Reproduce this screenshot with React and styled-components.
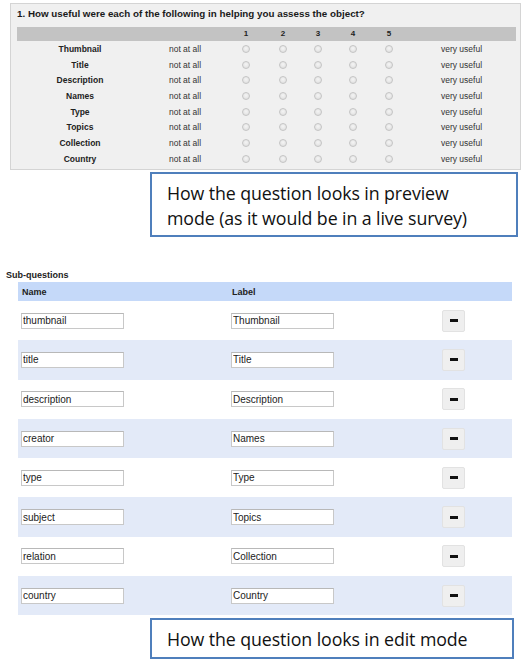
import React from "react";
import styled, { createGlobalStyle } from "styled-components";

const items = [
  { name: "thumbnail", label: "Thumbnail" },
  { name: "title", label: "Title" },
  { name: "description", label: "Description" },
  { name: "creator", label: "Names" },
  { name: "type", label: "Type" },
  { name: "subject", label: "Topics" },
  { name: "relation", label: "Collection" },
  { name: "country", label: "Country" },
];

const cols = "126px 84px 38px 36px 34px 36px 36px 1fr";

const App = () => (
  <Page>
    <GlobalStyle />
    <Preview>
      <Question>1. How useful were each of the following in helping you assess the object?</Question>
      <Scale>
        <ScaleHead>
          <span />
          <span />
          {[1, 2, 3, 4, 5].map((n) => (
            <span key={n}>{n}</span>
          ))}
          <span />
        </ScaleHead>
        {items.map((it) => (
          <ScaleRow key={it.name}>
            <RowLabel>{it.label}</RowLabel>
            <Anchor>not at all</Anchor>
            {[1, 2, 3, 4, 5].map((n) => (
              <Cell key={n}>
                <Radio />
              </Cell>
            ))}
            <Anchor>very useful</Anchor>
          </ScaleRow>
        ))}
      </Scale>
    </Preview>

    <Callout $top={2} $width={368} $height={65}>
      How the question looks in preview
      <br />
      mode (as it would be in a live survey)
    </Callout>

    <SectionTitle>Sub-questions</SectionTitle>
    <EditTable>
      <EditHead>
        <span>Name</span>
        <span>Label</span>
      </EditHead>
      {items.map((it, i) => (
        <EditRow key={it.name} $alt={i % 2 === 1}>
          <TextBox defaultValue={it.name} />
          <TextBox defaultValue={it.label} />
          <RemoveButton aria-label="remove">
            <Minus />
          </RemoveButton>
        </EditRow>
      ))}
    </EditTable>

    <Callout $top={3} $width={364} $height={41}>
      How the question looks in edit mode
    </Callout>
  </Page>
);

const GlobalStyle = createGlobalStyle`
  body {
    margin: 0;
    background: #ffffff;
    font-family: "Liberation Sans", Arial, sans-serif;
  }
`;

const Page = styled.div`
  width: 526px;
  height: 664px;
  display: flex;
  flex-direction: column;
  overflow: hidden;
`;

const Preview = styled.div`
  box-sizing: border-box;
  margin: 3px 0 0 10px;
  width: 511px;
  height: 167px;
  background: #f0f0f0;
  border: 1px solid #d4d4d4;
  padding: 2px 0 0 6px;
`;

const Question = styled.div`
  font-size: 9.8px;
  font-weight: bold;
  color: #1a1a1a;
  line-height: 16px;
  margin-bottom: 5px;
`;

const Scale = styled.div`
  width: 499px;
`;

const ScaleHead = styled.div`
  display: grid;
  grid-template-columns: ${cols};
  height: 14px;
  background: #c3c3c3;
  font-size: 8px;
  font-weight: bold;
  color: #222;
  align-items: center;
  justify-items: center;
  line-height: 14px;
`;

const ScaleRow = styled.div`
  display: grid;
  grid-template-columns: ${cols};
  height: 15.7px;
  align-items: center;
  justify-items: center;
`;

const RowLabel = styled.span`
  font-size: 8.5px;
  font-weight: bold;
  color: #222;
`;

const Anchor = styled.span`
  font-size: 8.5px;
  color: #333;
`;

const Cell = styled.span`
  display: flex;
  align-items: center;
  justify-content: center;
`;

const Radio = styled.span`
  width: 6px;
  height: 6px;
  border-radius: 50%;
  border: 1px solid #c4c4c4;
  background: radial-gradient(circle at 50% 40%, #f4f4f4 0%, #dcdcdc 100%);
`;

const Callout = styled.div`
  box-sizing: border-box;
  margin: ${(p) => p.$top}px 0 0 150px;
  width: ${(p) => p.$width}px;
  height: ${(p) => p.$height}px;
  border: 2px solid #4f7fbc;
  padding: 7px 0 0 15px;
  font-family: "Open Sans", "Liberation Sans", sans-serif;
  font-size: 17.8px;
  line-height: 25px;
  letter-spacing: -0.1px;
  color: #111;
`;

const SectionTitle = styled.div`
  margin: 32px 0 0 6px;
  font-size: 9px;
  font-weight: bold;
  color: #222;
  line-height: 13px;
`;

const EditTable = styled.div`
  margin-left: 18px;
  width: 494px;
`;

const EditHead = styled.div`
  display: grid;
  grid-template-columns: 210px 1fr;
  height: 19px;
  align-items: center;
  background: #c5d9f9;
  padding-left: 4px;
  font-size: 9px;
  font-weight: bold;
  color: #222;
`;

const EditRow = styled.div`
  display: grid;
  grid-template-columns: 210px 211px 1fr;
  align-items: center;
  height: 39.3px;
  padding-left: 3px;
  background: ${(p) => (p.$alt ? "#e3eaf8" : "#ffffff")};
`;

const TextBox = styled.input`
  box-sizing: border-box;
  width: 103px;
  height: 16px;
  border: 1px solid #c8c8c8;
  border-top-color: #b8b8b8;
  padding: 0 1px;
  font-family: "Liberation Sans", Arial, sans-serif;
  font-size: 10px;
  color: #222;
  background: #fff;
  outline: none;
`;

const RemoveButton = styled.button`
  width: 23px;
  height: 22px;
  padding: 0;
  border: 1px solid #e2e2e2;
  border-radius: 2px;
  background: #efefef;
  display: flex;
  align-items: center;
  justify-content: center;
  cursor: pointer;
`;

const Minus = styled.span`
  width: 8px;
  height: 3px;
  background: #111;
`;

export default App;
